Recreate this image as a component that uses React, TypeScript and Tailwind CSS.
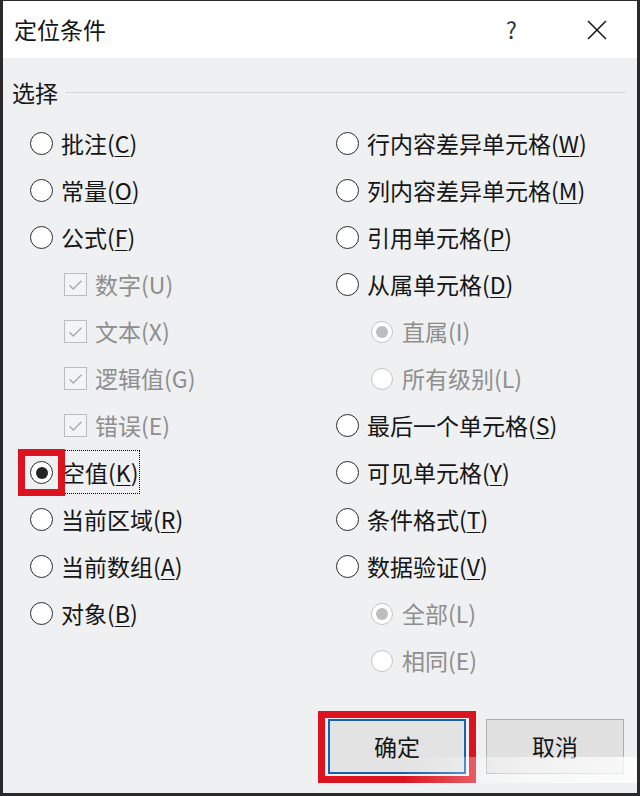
import React from 'react';

const FONT = { fontFamily: '"Noto Sans CJK SC", "Noto Sans", sans-serif' };

type Item = {
  label: string;
  key: string;
  kind: 'radio' | 'check' | 'subradio';
  disabled?: boolean;
  checked?: boolean;
  focus?: boolean;
};

const leftItems: Item[] = [
  { label: '批注', key: 'C', kind: 'radio' },
  { label: '常量', key: 'O', kind: 'radio' },
  { label: '公式', key: 'F', kind: 'radio' },
  { label: '数字', key: 'U', kind: 'check', disabled: true, checked: true },
  { label: '文本', key: 'X', kind: 'check', disabled: true, checked: true },
  { label: '逻辑值', key: 'G', kind: 'check', disabled: true, checked: true },
  { label: '错误', key: 'E', kind: 'check', disabled: true, checked: true },
  { label: '空值', key: 'K', kind: 'radio', checked: true, focus: true },
  { label: '当前区域', key: 'R', kind: 'radio' },
  { label: '当前数组', key: 'A', kind: 'radio' },
  { label: '对象', key: 'B', kind: 'radio' },
];

const rightItems: Item[] = [
  { label: '行内容差异单元格', key: 'W', kind: 'radio' },
  { label: '列内容差异单元格', key: 'M', kind: 'radio' },
  { label: '引用单元格', key: 'P', kind: 'radio' },
  { label: '从属单元格', key: 'D', kind: 'radio' },
  { label: '直属', key: 'I', kind: 'subradio', disabled: true, checked: true },
  { label: '所有级别', key: 'L', kind: 'subradio', disabled: true },
  { label: '最后一个单元格', key: 'S', kind: 'radio' },
  { label: '可见单元格', key: 'Y', kind: 'radio' },
  { label: '条件格式', key: 'T', kind: 'radio' },
  { label: '数据验证', key: 'V', kind: 'radio' },
  { label: '全部', key: 'L', kind: 'subradio', disabled: true, checked: true },
  { label: '相同', key: 'E', kind: 'subradio', disabled: true },
];

function Radio({ checked, disabled, size }: { checked?: boolean; disabled?: boolean; size: number }) {
  return (
    <span
      className={`flex shrink-0 items-center justify-center rounded-full bg-white border-[1.5px] ${
        disabled ? 'border-[#c4c4c4]' : 'border-[#2b2b2b]'
      } ${size === 23 ? 'w-[23px] h-[23px]' : 'w-[22px] h-[22px]'}`}
    >
      {checked && (
        <span
          className={`block rounded-full w-[12px] h-[12px] ${disabled ? 'bg-[#bdbdbd]' : 'bg-[#232323]'}`}
        />
      )}
    </span>
  );
}

function Check() {
  return (
    <span className="flex shrink-0 items-center justify-center w-[23px] h-[23px] border border-[#bcbcbc] bg-[#f3f4f5]">
      <svg width="15" height="12" viewBox="0 0 15 12" fill="none">
        <path d="M1.5 6.2 L5.3 10 L13.5 1.8" stroke="#a9a9a9" strokeWidth="1.3" />
      </svg>
    </span>
  );
}

function Row({ item }: { item: Item }) {
  const color = item.disabled ? 'text-[#8e8e8e]' : 'text-[#151515]';
  const text = (
    <span className={`leading-[30px] ${item.focus ? 'px-[1px] py-[4px] outline-1 outline-dotted outline-black' : ''}`}>
      {item.label}(
      {item.disabled ? item.key : <span className="underline underline-offset-[3px] decoration-1">{item.key}</span>})
    </span>
  );

  return (
    <div className={`flex h-[47px] items-center text-[23px] ${color}`}>
      {item.kind === 'radio' && (
        <>
          <span className="relative flex">
            <Radio checked={item.checked} size={23} />
            {item.focus && (
              <span className="absolute -inset-[12px] border-[7px] border-[#dc1420]" />
            )}
          </span>
          <span className="ml-[8px]">{text}</span>
        </>
      )}
      {item.kind === 'check' && (
        <>
          <span className="ml-[34px]">
            <Check />
          </span>
          <span className="ml-[8px]">{text}</span>
        </>
      )}
      {item.kind === 'subradio' && (
        <>
          <span className="ml-[35px]">
            <Radio checked={item.checked} disabled size={22} />
          </span>
          <span className="ml-[9px]">{text}</span>
        </>
      )}
    </div>
  );
}

export default function App() {
  return (
    <div
      className="relative flex h-[796px] w-[640px] flex-col overflow-hidden border-x-[3px] border-t border-b-[3px] border-[#2a2a2a] bg-[#eef0f1]"
      style={FONT}
    >
      {/* 标题栏 */}
      <div className="flex h-[57px] shrink-0 items-center bg-white pl-[11px] text-[23px] text-[#151515]">
        <span>定位条件</span>
        <span className="ml-auto mr-[70px] text-[23px] leading-none text-[#333]">?</span>
        <svg width="20" height="20" viewBox="0 0 20 20" className="mr-[30px]">
          <path d="M1 1 L19 19 M19 1 L1 19" stroke="#1a1a1a" strokeWidth="1.6" />
        </svg>
      </div>

      {/* 选择 */}
      <div className="mt-[19px] flex h-[30px] items-center pl-[9px] pr-[11px] text-[23px] text-[#151515]">
        <span>选择</span>
        <span className="ml-[8px] h-px flex-1 bg-[#d3d5d7]" />
      </div>

      <div className="mt-[13px] flex">
        <div className="w-[333px] pl-[27px]">
          {leftItems.map((it, i) => (
            <Row key={i} item={it} />
          ))}
        </div>
        <div className="flex-1">
          {rightItems.map((it, i) => (
            <Row key={i} item={it} />
          ))}
        </div>
      </div>

      {/* 按钮 */}
      <div className="mt-[35px] flex justify-end gap-[20px] pr-[13px]">
        <div className="relative">
          <button className="flex h-[55px] w-[138px] items-center justify-center border-2 border-[#1a5fb4] bg-[#e3e3e3] text-[23px] text-[#151515] shadow-[inset_0_0_0_1px_#d7e8f8]">
            确定
          </button>
          <span className="absolute -left-[10px] -right-[10px] -top-[8px] -bottom-[9px] border-[7px] border-[#dc1420]" />
        </div>
        <button className="flex h-[55px] w-[138px] items-center justify-center border border-[#adadad] bg-[#e1e1e1] text-[23px] text-[#151515]">
          取消
        </button>
      </div>

      {/* 水印残影 */}
      <span className="pointer-events-none absolute bottom-[10px] left-[400px] right-0 h-[26px] bg-linear-to-r from-transparent via-white/50 to-white/80" />
    </div>
  );
}
